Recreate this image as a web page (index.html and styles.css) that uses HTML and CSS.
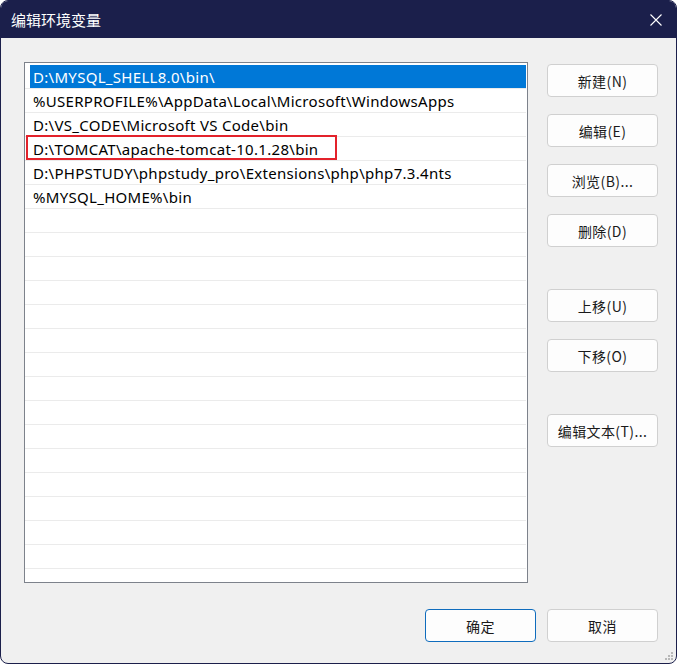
FILE: index.html
```html
<!DOCTYPE html>
<html lang="zh-CN">
<head>
<meta charset="utf-8">
<title>编辑环境变量</title>
<link rel="stylesheet" href="styles.css">
</head>
<body>
<div class="window">
  <div class="titlebar">
    <span class="title">编辑环境变量</span>
    <svg class="close" width="12" height="12" viewBox="0 0 12 12"><path d="M0.5 0.5 L11.5 11.5 M11.5 0.5 L0.5 11.5" stroke="#ffffff" stroke-width="1.1" fill="none"/></svg>
  </div>
  <div class="content">
    <div class="main">
      <div class="list">
        <div class="row"><span class="cell selected">D:\MYSQL_SHELL8.0\bin\</span></div>
        <div class="row"><span class="cell">%USERPROFILE%\AppData\Local\Microsoft\WindowsApps</span></div>
        <div class="row"><span class="cell">D:\VS_CODE\Microsoft VS Code\bin</span></div>
        <div class="row"><span class="cell">D:\TOMCAT\apache-tomcat-10.1.28\bin</span></div>
        <div class="row"><span class="cell">D:\PHPSTUDY\phpstudy_pro\Extensions\php\php7.3.4nts</span></div>
        <div class="row"><span class="cell">%MYSQL_HOME%\bin</span></div>
        <div class="row"></div>
        <div class="row"></div>
        <div class="row"></div>
        <div class="row"></div>
        <div class="row"></div>
        <div class="row"></div>
        <div class="row"></div>
        <div class="row"></div>
        <div class="row"></div>
        <div class="row"></div>
        <div class="row"></div>
        <div class="row"></div>
        <div class="row"></div>
        <div class="row"></div>
        <div class="row"></div>
        <div class="highlight"></div>
      </div>
      <div class="side">
        <div class="group">
          <button class="btn">新建(N)</button>
          <button class="btn">编辑(E)</button>
          <button class="btn">浏览(B)...</button>
          <button class="btn">删除(D)</button>
        </div>
        <div class="group">
          <button class="btn">上移(U)</button>
          <button class="btn">下移(O)</button>
        </div>
        <div class="group">
          <button class="btn">编辑文本(T)...</button>
        </div>
      </div>
    </div>
    <div class="footer">
      <button class="btn default">确定</button>
      <button class="btn">取消</button>
    </div>
  </div>
  <div class="grip">
    <i class="d1"></i><i class="d2"></i><i class="d3"></i><i class="d4"></i><i class="d5"></i><i class="d6"></i>
  </div>
</div>
</body>
</html>
```
FILE: styles.css
```css
* { box-sizing: border-box; }
html, body { margin: 0; padding: 0; background: #ffffff; }
body {
  font-family: "Noto Sans", "Noto Sans CJK SC", sans-serif;
  width: 677px;
  height: 664px;
}
.window {
  position: relative;
  width: 677px;
  height: 664px;
  border: 1px solid #1b1f4b;
  border-radius: 8px;
  overflow: hidden;
  background: #f0f0f0;
  display: flex;
  flex-direction: column;
}
.titlebar {
  height: 37px;
  background: #1b1f4b;
  display: flex;
  align-items: center;
  justify-content: space-between;
  padding: 0 14px 0 10px;
  flex: none;
}
.title {
  color: #ffffff;
  font-family: "Noto Sans CJK SC", sans-serif;
  font-size: 15px;
}
.close { display: block; margin-top: 1px; }
.content {
  flex: 1;
  padding: 24px 18px 21px 23px;
  display: flex;
  flex-direction: column;
}
.main {
  display: flex;
  gap: 19px;
}
.list {
  position: relative;
  width: 504px;
  height: 521px;
  background: #ffffff;
  border: 1px solid #7d828b;
  padding: 2px 1px 0 0;
  overflow: hidden;
}
.row {
  height: 24px;
  border-bottom: 1px solid #ebebeb;
  display: flex;
}
.cell {
  display: block;
  margin-left: 5px;
  padding: 1px 0 0 3px;
  font-size: 15px;
  letter-spacing: 0.3px;
  line-height: 22px;
  color: #000000;
  white-space: nowrap;
}
.cell.selected {
  flex: 1;
  background: #0078d7;
  color: #ffffff;
}
.highlight {
  position: absolute;
  left: 1px;
  top: 72px;
  width: 311px;
  height: 25px;
  border: 2px solid #e3222b;
}
.side {
  display: flex;
  flex-direction: column;
  gap: 42px;
  padding-top: 2px;
}
.group {
  display: flex;
  flex-direction: column;
  gap: 17px;
}
.btn {
  width: 111px;
  height: 33px;
  background: #fdfdfd;
  border: 1px solid #d0d0d0;
  border-radius: 4px;
  font-family: "Noto Sans CJK SC", sans-serif;
  font-size: 14px;
  letter-spacing: 0.4px;
  color: #1a1a1a;
  padding: 0;
  margin: 0;
}
.btn.default {
  border-color: #0f6cbd;
}
.footer {
  margin-top: 26px;
  display: flex;
  justify-content: flex-end;
  gap: 11px;
}
.grip {
  position: absolute;
  right: 3px;
  bottom: 3px;
  width: 8px;
  height: 8px;
}
.grip i {
  position: absolute;
  width: 2px;
  height: 2px;
  background: #b8b8b8;
}
.grip .d1 { right: 0; top: 0; }
.grip .d2 { right: 3px; top: 3px; }
.grip .d3 { right: 0; top: 3px; }
.grip .d4 { right: 6px; top: 6px; }
.grip .d5 { right: 3px; top: 6px; }
.grip .d6 { right: 0; top: 6px; }
```
